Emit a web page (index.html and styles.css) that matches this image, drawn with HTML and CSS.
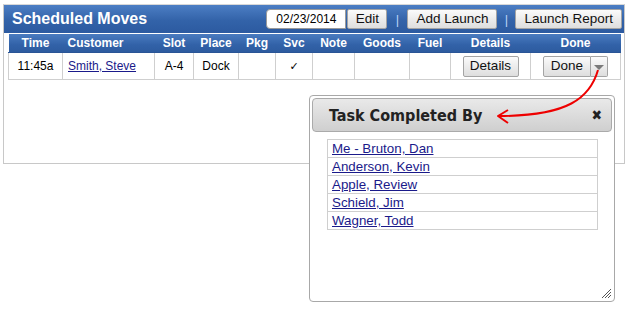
FILE: index.html
```html
<!DOCTYPE html>
<html>
<head>
<meta charset="utf-8">
<link rel="stylesheet" href="styles.css">
</head>
<body>
<div class="panel">
  <div class="panel-header">
    <div class="title">Scheduled Moves</div>
    <div class="controls">
      <div class="date-input">02/23/2014</div>
      <button class="btn btn-edit">Edit</button>
      <span class="sep">|</span>
      <button class="btn">Add Launch</button>
      <span class="sep sep-2">|</span>
      <button class="btn">Launch Report</button>
    </div>
  </div>
  <table class="moves">
    <colgroup>
      <col class="c-time"><col class="c-cust"><col class="c-slot"><col class="c-place"><col class="c-pkg"><col class="c-svc"><col class="c-note"><col class="c-goods"><col class="c-fuel"><col class="c-details"><col class="c-done">
    </colgroup>
    <thead>
      <tr>
        <th>Time</th><th class="left">Customer</th><th>Slot</th><th>Place</th><th>Pkg</th><th>Svc</th><th>Note</th><th>Goods</th><th>Fuel</th><th>Details</th><th>Done</th>
      </tr>
    </thead>
    <tbody>
      <tr>
        <td>11:45a</td>
        <td class="left"><a href="#" class="link">Smith, Steve</a></td>
        <td>A-4</td>
        <td>Dock</td>
        <td></td>
        <td class="check">&#10003;</td>
        <td></td>
        <td></td>
        <td></td>
        <td><button class="btn btn-row">Details</button></td>
        <td><div class="split"><button class="btn btn-row btn-done">Done</button><button class="btn btn-row btn-drop"><span class="tri"></span></button></div></td>
      </tr>
    </tbody>
  </table>
</div>

<div class="popup">
  <div class="popup-title">
    <span>Task Completed By</span>
    <span class="close">&#10006;</span>
  </div>
  <table class="people">
    <tr><td><a href="#" class="link">Me - Bruton, Dan</a></td></tr>
    <tr><td><a href="#" class="link">Anderson, Kevin</a></td></tr>
    <tr><td><a href="#" class="link">Apple, Review</a></td></tr>
    <tr><td><a href="#" class="link">Schield, Jim</a></td></tr>
    <tr><td><a href="#" class="link">Wagner, Todd</a></td></tr>
  </table>
  <svg class="grip" width="12" height="12" viewBox="0 0 12 12">
    <path d="M11 2 L2 11 M11 5 L5 11 M11 8 L8 11" stroke="#555" stroke-width="1" fill="none"/>
  </svg>
</div>

<svg class="arrow" width="630" height="312" viewBox="0 0 630 312">
  <path d="M598 70 C 590 98 568 116 499 116" stroke="#e00" stroke-width="2" fill="none"/>
  <path d="M508 110 L498 116 L508 123" stroke="#e00" stroke-width="2" fill="none" stroke-linejoin="round"/>
</svg>
</body>
</html>
```

FILE: styles.css
```css
html, body {
  margin: 0;
  padding: 0;
  background: #fff;
  font-family: "Liberation Sans", Arial, sans-serif;
}

.panel {
  margin: 4px 0 0 3px;
  width: 620px;
  height: 158px;
  border: 1px solid #c8c8c8;
  border-top-color: #d8d8d8;
}

.panel-header {
  height: 28px;
  display: flex;
  align-items: center;
  justify-content: space-between;
  background: linear-gradient(#4c7ec4, #3363a9 55%, #2c5aa0);
}

.title {
  color: #fff;
  font-weight: bold;
  font-size: 16px;
  padding-left: 8px;
  padding-bottom: 1px;
}

.controls {
  display: flex;
  align-items: center;
  padding-right: 2px;
}

.date-input {
  box-sizing: border-box;
  width: 80px;
  height: 20px;
  background: #fff;
  border: 1px solid #9a9a9a;
  border-radius: 4px 0 0 4px;
  font-size: 12px;
  line-height: 18px;
  text-align: center;
  color: #000;
}

.btn {
  box-sizing: border-box;
  height: 20px;
  padding: 0 8px;
  margin: 0;
  font-family: "Liberation Sans", Arial, sans-serif;
  font-size: 13.5px;
  color: #111;
  background: linear-gradient(#fbfbfb, #ececec 50%, #dedede);
  border: 1px solid #a4a4a4;
  border-radius: 2px;
  line-height: 16px;
}

.btn-edit {
  width: 40px;
  padding: 0;
  margin-left: 1px;
}

.sep {
  color: #b8d4f4;
  font-size: 13px;
  width: 20px;
  text-align: center;
}

.sep-2 {
  width: 18px;
}

.moves {
  margin: 1px 4px 0 4px;
  width: 612px;
  border-collapse: collapse;
  table-layout: fixed;
  font-size: 12px;
}

.c-time { width: 54px; }
.c-cust { width: 92px; }
.c-slot { width: 39px; }
.c-place { width: 45px; }
.c-pkg { width: 37px; }
.c-svc { width: 37px; }
.c-note { width: 42px; }
.c-goods { width: 55px; }
.c-fuel { width: 41px; }
.c-details { width: 80px; }
.c-done { width: 90px; }

.moves th {
  height: 18px;
  padding: 0;
  color: #fff;
  font-weight: bold;
  font-size: 12px;
  text-align: center;
  background: linear-gradient(#4a7bc0, #3262a8 60%, #2d5b9f);
  border-bottom: 1px solid #2a5596;
}

.moves td {
  height: 26px;
  padding: 0;
  text-align: center;
  color: #000;
  border: 1px solid #cfcfcf;
  border-top: none;
}

.moves .left {
  text-align: left;
  padding-left: 5px;
}

.link {
  color: #1a1a8a;
  text-decoration: underline;
}

.check {
  font-size: 11px;
  font-family: "DejaVu Sans", sans-serif;
}

.btn-row {
  height: 21px;
}

.moves .btn-row {
  width: 56px;
  padding: 0;
}

.split {
  display: flex;
  justify-content: center;
}

.moves .btn-done {
  width: 48px;
  border-radius: 2px 0 0 2px;
}

.moves .btn-drop {
  width: 17px;
  border-left: none;
  border-radius: 0 2px 2px 0;
  padding: 0;
  display: flex;
  align-items: center;
  justify-content: center;
}

.tri {
  width: 0;
  height: 0;
  border-left: 5px solid transparent;
  border-right: 5px solid transparent;
  border-top: 5px solid #7a7a7a;
  margin-top: 2px;
}

.popup {
  position: absolute;
  left: 309px;
  top: 95px;
  width: 304px;
  height: 205px;
  background: #fff;
  border: 1px solid #a8a8a8;
  border-radius: 4px;
}

.popup-title {
  margin: 2px 2px 0 2px;
  height: 34px;
  box-sizing: border-box;
  border: 1px solid #aaaaaa;
  border-radius: 4px;
  background: linear-gradient(#e9e9e9, #dcdcdc 50%, #cfcfcf);
  display: flex;
  align-items: center;
  justify-content: space-between;
  padding: 0 9px 0 16px;
  font-family: "DejaVu Sans Condensed", "DejaVu Sans", Verdana, sans-serif;
  font-stretch: condensed;
  font-weight: bold;
  font-size: 16px;
  color: #222;
}

.close {
  font-family: "DejaVu Sans", sans-serif;
  font-size: 14px;
  color: #222;
}

.people {
  margin: 7px 0 0 17px;
  width: 271px;
  border-collapse: collapse;
  font-size: 13.33px;
}

.people td {
  height: 17px;
  line-height: 17px;
  padding: 0 0 0 4px;
  border: 1px solid #cfcfcf;
}

.grip {
  position: absolute;
  right: 2px;
  bottom: 2px;
}

.arrow {
  position: absolute;
  left: 0;
  top: 0;
  pointer-events: none;
}
```
